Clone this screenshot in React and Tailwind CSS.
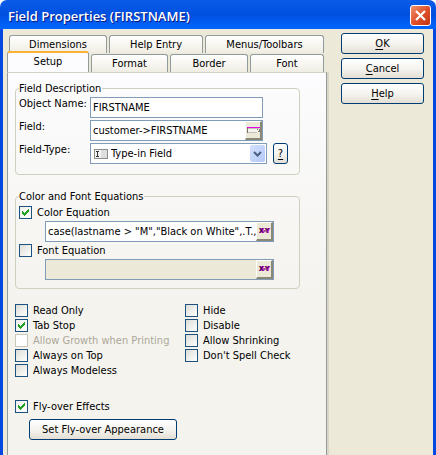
import React from "react";

const buttonClass =
  "flex h-[21px] items-center justify-center rounded-[3px] border border-[#003c74] bg-linear-to-b from-white via-[#f5f4ef] to-[#e3dfd5] leading-none";

function Tab({ children, active, className = "" }) {
  return (
    <button
      type="button"
      role="tab"
      aria-selected={!!active}
      className={
        (active
          ? "relative z-10 h-[21px] rounded-t-[3px] border-x border-t-2 border-x-[#919b9c] border-t-[#f9b233] bg-[#fcfcfe] pb-[3px] "
          : "h-[18px] rounded-t-[3px] border border-b-0 border-[#919b9c] bg-linear-to-b from-white to-[#efede3] ") + className
      }
    >
      {children}
    </button>
  );
}

function Check({ children, checked, disabled }) {
  return (
    <label className={"flex h-[13px] items-center gap-[5px] whitespace-nowrap " + (disabled ? "text-[#aca899]" : "text-black")}>
      <span className="relative flex size-[13px] shrink-0">
        <input
          type="checkbox"
          defaultChecked={checked}
          disabled={disabled}
          className="peer size-[13px] appearance-none border border-[#1c5180] bg-linear-to-br from-[#dcdcd7] to-white checked:from-[#eeeeea] disabled:border-[#cac8bb] disabled:from-white"
        />
        <svg viewBox="0 0 13 13" className="pointer-events-none absolute inset-0 hidden size-[13px] peer-checked:block" shapeRendering="crispEdges">
          <path d="M3 5h1v1h1v1h1v-1h1v-1h1v-1h1v-1h1v3h-1v1h-1v1h-1v1h-1v1h-1v-1h-1v-1h-1z" fill="#21a121" />
        </svg>
      </span>
      <span>{children}</span>
    </label>
  );
}

function Equation({ label, value, disabled }) {
  return (
    <div className={"ml-[26px] mr-[22px] flex h-[21px] border border-[#7f9db9] " + (disabled ? "bg-[#ece9d8]" : "bg-white")}>
      <input aria-label={label} defaultValue={value} disabled={disabled} className="min-w-0 flex-1 pl-0.5" />
      <button
        type="button"
        aria-label={"Edit " + label}
        className="flex h-[19px] w-[17px] items-center justify-center border border-b-2 border-r-2 border-white border-b-[#8a8777] border-r-[#8a8777] bg-[#ece9d8] text-[7px] font-bold leading-none text-[#50004c] text-shadow-[1px_0_0_#e000e0]"
      >
        X-Y
      </button>
    </div>
  );
}

function Group({ title, className, children }) {
  return (
    <fieldset className={"mr-[19px] min-w-0 rounded-[4px] border border-[#d0d0bf] px-[3px] " + className}>
      <legend className="h-[15px] pr-px leading-[15px]">{title}</legend>
      {children}
    </fieldset>
  );
}

export default function App() {
  return (
    <div className="flex min-h-screen flex-col overflow-hidden rounded-t-[7px] bg-[#ece9d8] font-['DejaVu_Sans_Condensed','DejaVu_Sans',sans-serif] text-[11px] leading-[13px] text-black">
      <header className="flex h-[29px] items-center justify-between bg-linear-to-b from-[#0a5ce8] via-[#0050e0] to-[#0066ff] pl-2 pr-[5px]">
        <h1 className="whitespace-nowrap pt-1 font-['Open_Sans','Noto_Sans',sans-serif] text-[13px] font-semibold text-white text-shadow-[1px_1px_0_#0a1883]">
          Field Properties (FIRSTNAME)
        </h1>
        <button
          type="button"
          aria-label="Close"
          className="mt-px flex size-[21px] items-center justify-center rounded-[3px] border border-white bg-linear-to-br from-[#f0906c] via-[#e0502c] to-[#c43410]"
        >
          <svg viewBox="0 0 13 13" className="size-[13px]">
            <path d="M2 2l9 9M11 2l-9 9" stroke="#fff" strokeWidth="2.2" />
          </svg>
        </button>
      </header>

      <main className="flex flex-1 border-x-[3px] border-[#0049e0] pl-1">
        <div className="flex min-w-0 flex-1 flex-col pt-1.5">
          <div role="tablist" className="pr-[3px]">
            <div className="flex gap-0.5 pl-0.5">
              <Tab className="w-[98px]">Dimensions</Tab>
              <Tab className="w-[94px]">Help Entry</Tab>
              <Tab className="flex-1">Menus/Toolbars</Tab>
            </div>
            <div className="flex h-[19px] items-end gap-0.5">
              <Tab active className="w-[82px]">Setup</Tab>
              <Tab className="w-[77px]">Format</Tab>
              <Tab className="w-[78px]">Border</Tab>
              <Tab className="flex-1">Font</Tab>
            </div>
          </div>

          <div
            role="tabpanel"
            className="flex-1 border-x border-t border-x-[#919b9c] border-t-[#d5d2c4] bg-linear-to-b from-[#fcfcfe] to-[#f4f3ee] to-60% px-[7px] pb-[15px] pt-2 shadow-[2px_0_0_#d9d6c6]"
          >
            <Group title="Field Description" className="pb-2.5">
              <div className="grid grid-cols-[71px_minmax(0,1fr)] gap-y-0.5 pt-px">
                <label htmlFor="object-name">Object Name:</label>
                <input
                  id="object-name"
                  defaultValue="FIRSTNAME"
                  className="mr-[33px] h-[21px] min-w-0 border border-[#7f9db9] bg-white pl-0.5"
                />
                <label htmlFor="field">Field:</label>
                <div className="mr-[33px] flex h-[21px] border border-[#7f9db9] bg-white">
                  <input id="field" defaultValue="customer->FIRSTNAME" className="min-w-0 flex-1 pl-0.5" />
                  <button
                    type="button"
                    aria-label="Choose field"
                    className="flex h-[19px] w-[17px] items-center justify-center border border-b-2 border-r-2 border-white border-b-[#8a8777] border-r-[#8a8777] bg-[#ece9d8]"
                  >
                    <svg viewBox="0 0 13 8" className="h-2 w-[13px] shrink-0" shapeRendering="crispEdges">
                      <path d="M1 2h11v5H1z" fill="#f4f3ee" />
                      <path d="M0 1h13v1H0z" fill="#e800e8" />
                      <path d="M0 2h1v5H0zM10 3h1v1h-1zM12 3h1v3h-1zM11 5h1v1h-1z" fill="#77756c" />
                      <path d="M1 6h9v1H1zM1 2h11v1H1z" fill="#c5c2b5" />
                    </svg>
                  </button>
                </div>
                <label htmlFor="field-type">Field-Type:</label>
                <div className="flex gap-1.5 pr-2">
                  <div className="relative flex-1">
                    <select
                      id="field-type"
                      defaultValue="Type-in Field"
                      className="block h-[21px] w-full appearance-none border border-[#7f9db9] bg-white pl-5"
                    >
                      <option>Type-in Field</option>
                    </select>
                    <svg viewBox="0 0 14 10" className="pointer-events-none absolute left-1 top-1.5 h-2.5 w-3.5" shapeRendering="crispEdges">
                      <path d="M0 0h14v10H0z" fill="#8c8c8c" />
                      <path d="M1 1h12v8H1z" fill="#dedede" />
                      <path d="M1 1h6v8H1z" fill="#f4f4f4" />
                      <path d="M2 2h3v1H4v4h1v1H2V7h1V3H2z" fill="#333" />
                    </svg>
                    <span className="pointer-events-none absolute right-0.5 top-0.5 flex h-[17px] w-[15px] items-center justify-center rounded-[2px] bg-linear-to-br from-[#d3e0fd] to-[#b4c9f8]">
                      <svg viewBox="0 0 9 6" className="h-1.5 w-[9px]">
                        <path d="M1 1l3.500 3.500L8 1" fill="none" stroke="#4d6185" strokeWidth="2" />
                      </svg>
                    </span>
                  </div>
                  <button type="button" className={buttonClass + " w-[15px]"}>
                    <u className="underline-offset-2">?</u>
                  </button>
                </div>
              </div>
            </Group>

            <Group title="Color and Font Equations" className="mt-3.5 pb-2">
              <div className="flex flex-col gap-0.5 pt-0.5">
                <Check checked>Color Equation</Check>
                <Equation label="Color Equation value" value={'case(lastname > "M","Black on White",.T.,"Black on Red")'} />
                <Check>Font Equation</Check>
                <Equation label="Font Equation value" value="" disabled />
              </div>
            </Group>

            <div className="mt-[15px] flex">
              <div className="flex w-[170px] flex-col gap-0.5">
                <Check>Read Only</Check>
                <Check checked>Tab Stop</Check>
                <Check disabled>Allow Growth when Printing</Check>
                <Check>Always on Top</Check>
                <Check>Always Modeless</Check>
              </div>
              <div className="flex flex-col gap-0.5">
                <Check>Hide</Check>
                <Check>Disable</Check>
                <Check>Allow Shrinking</Check>
                <Check>Don't Spell Check</Check>
              </div>
            </div>

            <div className="mt-[23px] flex flex-col gap-1.5">
              <Check checked>Fly-over Effects</Check>
              <button type="button" className={buttonClass + " ml-3.5 w-[148px]"}>
                Set Fly-over Appearance
              </button>
            </div>
          </div>
        </div>

        <div className="ml-3.5 mr-[9px] mt-1 flex w-[83px] shrink-0 flex-col gap-1">
          <button type="button" className={buttonClass}>
            <u className="underline-offset-2">O</u>K
          </button>
          <button type="button" className={buttonClass}>
            <u className="underline-offset-2">C</u>ancel
          </button>
          <button type="button" className={buttonClass}>
            <u className="underline-offset-2">H</u>elp
          </button>
        </div>
      </main>
    </div>
  );
}
